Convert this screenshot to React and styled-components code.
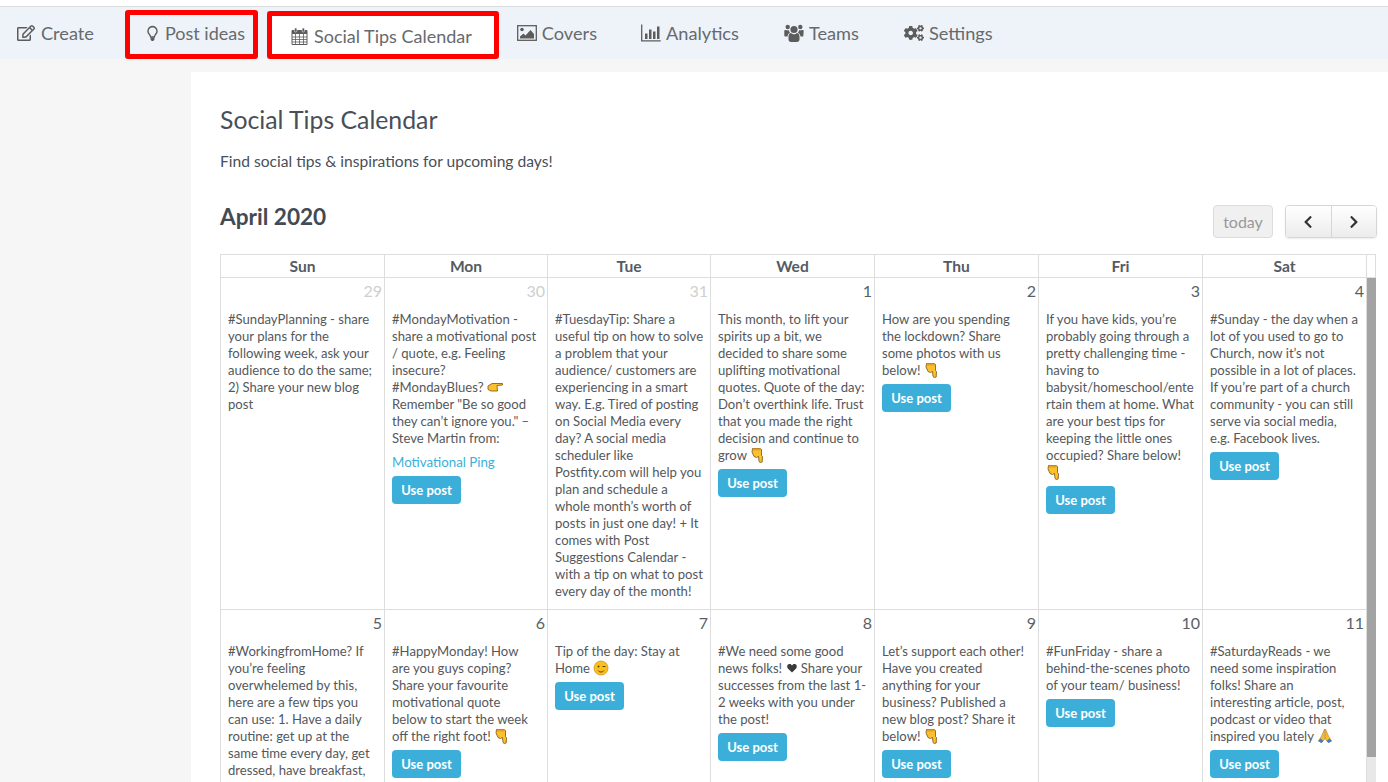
import React from 'react';
import styled, { createGlobalStyle } from 'styled-components';
import { FaRegEdit, FaCogs, FaChevronLeft, FaChevronRight } from 'react-icons/fa';

const GlobalStyle = createGlobalStyle`
  html, body {
    margin: 0;
    height: 782px;
    overflow: hidden;
    background: #fff;
    font-family: Lato, "Open Sans", sans-serif;
    color: #484c52;
  }
`;

const Page = styled.div`
  height: 782px;
  overflow: hidden;
  padding-top: 6px;
  box-sizing: border-box;
  background: #fff;
`;

const Nav = styled.nav`
  display: flex;
  align-items: flex-end;
  height: 52px;
  border-top: 1px solid #d9dcdf;
  background: #eef3fa;
`;

const NavItem = styled.a`
  display: flex;
  align-items: center;
  box-sizing: border-box;
  height: 52px;
  padding: 0 22px 0 23px;
  gap: 5px;
  font-size: 18.2px;
  color: #666a6e;
  white-space: nowrap;
  svg {
    flex: none;
    width: 20px;
    height: 20px;
    color: #5c5c5c;
  }
`;

const CreateItem = styled(NavItem)`
  padding: 0 0 0 17px;
  gap: 6px;
  svg {
    width: 18px;
    height: 18px;
  }
`;

const PostItem = styled(NavItem)`
  height: 49px;
  margin-left: 31px;
  padding: 0 8px 3px 14px;
  gap: 4px;
  font-size: 18px;
  border: 5px solid #f00;
  border-radius: 3px;
  svg {
    width: 17px;
    height: 17px;
  }
`;

const CalendarItem = styled(NavItem)`
  height: 48px;
  margin-left: 9px;
  padding: 2px 22px 0 19px;
  gap: 6px;
  font-size: 18px;
  border: 5px solid #f00;
  border-radius: 3px;
  background: #fff;
  svg {
    width: 17px;
    height: 18px;
  }
`;

const CoversItem = styled(NavItem)`
  padding: 0 21px 0 18px;
`;

const Layout = styled.div`
  display: flex;
  height: 723px;
  background: #f6f6f6;
`;

const Sidebar = styled.aside`
  flex: 0 0 191px;
`;

const Main = styled.main`
  flex: 1;
  margin-top: 13px;
  padding: 30px 11px 0 29px;
  background: #fff;
  overflow: hidden;
`;

const Title = styled.h1`
  margin: 0;
  font-size: 24.8px;
  font-weight: 400;
  line-height: 36px;
  color: #484f58;
`;

const Subtitle = styled.p`
  margin: 11px 0 0;
  font-size: 15.6px;
  line-height: 24px;
  color: #484f58;
`;

const CalendarHeader = styled.div`
  display: flex;
  justify-content: space-between;
  align-items: flex-start;
  margin-top: 27px;
  height: 54px;
`;

const MonthTitle = styled.h2`
  margin: 0;
  font-size: 22.6px;
  font-weight: 700;
  line-height: 34px;
  color: #434a54;
`;

const Controls = styled.div`
  display: flex;
  gap: 12px;
  margin-top: 5px;
`;

const TodayButton = styled.button`
  width: 60px;
  height: 33px;
  padding: 0;
  border: 1px solid #dcdcdc;
  border-radius: 4px;
  background: #f0f0f0;
  font: 400 16px Lato, sans-serif;
  color: #999;
`;

const ArrowGroup = styled.div`
  display: flex;
  width: 92px;
  height: 33px;
  box-sizing: border-box;
  border: 1px solid #d6d6d6;
  border-radius: 4px;
  overflow: hidden;
  box-shadow: 0 1px 2px rgba(0, 0, 0, 0.08);
`;

const ArrowButton = styled.button`
  flex: 1;
  display: flex;
  align-items: center;
  justify-content: center;
  padding: 0;
  border: 0;
  border-left: ${(p) => (p.$divided ? '1px solid #d6d6d6' : '0')};
  background: linear-gradient(#fff, #ececec);
  color: #333;
  font-size: 14px;
`;

const COLUMNS = '165px 163px 163px 164px 164px 164px 164px';

const Calendar = styled.div`
  width: 1156px;
  border-top: 1px solid #ddd;
  box-sizing: border-box;
`;

const HeadRow = styled.div`
  display: grid;
  grid-template-columns: ${COLUMNS} 9px;
`;

const HeadCell = styled.div`
  height: 23px;
  box-sizing: border-box;
  border-right: 1px solid #ddd;
  border-bottom: 1px solid #ddd;
  text-align: center;
  font-size: 15.6px;
  font-weight: 700;
  line-height: 23px;
  color: #555b63;
  &:first-child {
    border-left: 1px solid #ddd;
  }
`;

const BodyWrap = styled.div`
  display: flex;
`;

const Weeks = styled.div`
  display: grid;
  grid-template-columns: ${COLUMNS};
`;

const DayCell = styled.div`
  box-sizing: border-box;
  min-height: 332px;
  padding: 2px 7px 9px;
  border-right: 1px solid #ddd;
  border-bottom: 1px solid #ddd;
  &:nth-child(7n + 1) {
    border-left: 1px solid #ddd;
  }
`;

const DayNumber = styled.div`
  margin-right: -5px;
  text-align: right;
  font-size: 16px;
  line-height: 22px;
  color: ${(p) => (p.$muted ? '#cfcfcf' : '#595f66')};
`;

const Tip = styled.p`
  margin: 9px ${(p) => (p.$wide ? '-4px' : '0')} 0 0;
  font-size: 13.1px;
  line-height: 17px;
  color: #54585c;
  white-space: pre-line;
  overflow-wrap: anywhere;
`;

const TipLink = styled.a`
  display: block;
  margin-top: 7px;
  font-size: 13.3px;
  line-height: 17px;
  color: #3bafda;
`;

const UsePost = styled.button`
  display: block;
  width: 69px;
  height: 28px;
  margin-top: 5px;
  padding: 0;
  border: 0;
  border-radius: 4px;
  background: #3bafda;
  color: #fff;
  font: 700 13px Lato, sans-serif;
`;

const Scrollbar = styled.div`
  flex: 0 0 9px;
  background: #e8e8e8;
`;

const ScrollThumb = styled.div`
  height: 479px;
  background: #a3a3a3;
`;

const EmojiSvg = styled.svg`
  display: inline-block;
  width: ${(p) => p.$size || 16}px;
  height: ${(p) => p.$size || 16}px;
  vertical-align: ${(p) => (p.$size ? '-1px' : '-3px')};
`;

const BulbIcon = () => (
  <svg viewBox="0 0 17 17">
    <path d="M8.500 1.500a4.600 4.600 0 0 0-3 8c.8.800 1 1.500 1.100 2.500h3.800c.1-1 .3-1.700 1.100-2.500a4.600 4.600 0 0 0-3-8z" fill="none" stroke="currentColor" strokeWidth="1.300" />
    <path d="M6.600 12.500h3.800v2l-1 1.500h-1.800l-1-1.500z" fill="currentColor" />
  </svg>
);

const CalendarIcon = () => (
  <svg viewBox="0 0 17 18">
    <path d="M1 3.500h15v14H1z" fill="#fff" stroke="currentColor" strokeWidth="1" />
    <path d="M1 3.500h15v3.500H1z" fill="currentColor" />
    <path d="M1 10h15M1 12.500h15M1 15h15M4.500 7v10M8.500 7v10M12.500 7v10" stroke="currentColor" strokeWidth="0.8" />
    <rect x="3.500" y="1" width="2.400" height="4" rx="1" fill="currentColor" stroke="#fff" strokeWidth="0.5" />
    <rect x="11.100" y="1" width="2.400" height="4" rx="1" fill="currentColor" stroke="#fff" strokeWidth="0.5" />
  </svg>
);

const ImageIcon = () => (
  <svg viewBox="0 0 20 20">
    <rect x="0.700" y="2.700" width="18.600" height="14.600" fill="none" stroke="currentColor" strokeWidth="1.300" />
    <circle cx="5" cy="6.500" r="1.800" fill="currentColor" />
    <path d="M3 15.500v-2l3.500-3 2 2L13.500 7l3.500 4v4.500z" fill="currentColor" />
  </svg>
);

const ChartIcon = () => (
  <svg viewBox="0 0 20 20">
    <path d="M.7 1.500v16.300h19" fill="none" stroke="currentColor" strokeWidth="1.300" />
    <path d="M4 10.500h2.500V16H4zM8 6.500h2.500V16H8zM12 8.500h2.500V16H12zM16 3.500h2.500V16H16z" fill="currentColor" />
  </svg>
);

const UsersIcon = () => (
  <svg viewBox="0 0 20 20">
    <circle cx="10" cy="6.500" r="3.600" fill="currentColor" />
    <circle cx="3.700" cy="4" r="2.200" fill="currentColor" />
    <circle cx="16.300" cy="4" r="2.200" fill="currentColor" />
    <path d="M4.500 13.500c0-2.500 1.500-3.500 2.500-3.500 1 .9 2 1.200 3 1.200s2-.3 3-1.200c1 0 2.500 1 2.500 3.500v3c0 1.500-1 2.500-2.500 2.500H7c-1.500 0-2.500-1-2.500-2.500z" fill="currentColor" />
    <path d="M.3 7.500C.3 7 1 6.700 2 7c1 .5 2 .5 3 .3.100 1 .500 2 1.200 2.300-1.500.8-2.500 2-2.700 4H1.500c-.8 0-1.200-.5-1.200-1.300zM19.700 7.500c0-.5-.7-.8-1.700-.5-1 .5-2 .5-3 .3-.1 1-.5 2-1.200 2.300 1.500.8 2.500 2 2.700 4h1.700c.8 0 1.200-.5 1.200-1.300z" fill="currentColor" />
  </svg>
);

const PointDown = () => (
  <EmojiSvg viewBox="0 0 16 16">
    <path d="M2.500 1.500h7.500l1.500 1v6l1 1-.3 5.500-2 .5-1.200-1-.5-5-2 1-2.500-1L2 5z" fill="#fcc02e" stroke="#7a5210" strokeWidth="0.8" />
    <path d="M3 1.500h7v2H3z" fill="#e8a020" />
  </EmojiSvg>
);

const PointRight = () => (
  <EmojiSvg viewBox="0 0 16 16">
    <path d="M1 7l4-2.500h10.500v1.500L10 6.500l.5 5.500H4L1 10.500z" fill="#fcc02e" stroke="#7a5210" strokeWidth="0.8" />
  </EmojiSvg>
);

const Wink = () => (
  <EmojiSvg viewBox="0 0 16 16">
    <circle cx="8" cy="8" r="7" fill="#fcc21b" stroke="#c98a10" strokeWidth="0.7" />
    <circle cx="5.500" cy="6.500" r="1" fill="#5a3a10" />
    <path d="M9.500 6.500h3M5 10.500c1.500 2 4.500 2 6 0" fill="none" stroke="#5a3a10" strokeWidth="1" />
  </EmojiSvg>
);

const Pray = () => (
  <EmojiSvg viewBox="0 0 16 16">
    <path d="M7.500 1L4.500 8 1.500 13l3 1.500 3-3zM8.500 1l3 7 3 5-3 1.500-3-3z" fill="#fbb92f" stroke="#a9761a" strokeWidth="0.5" />
    <path d="M1 13l3.500 2 2-2-3-2.500zM15 13l-3.500 2-2-2 3-2.500z" fill="#3b7fc4" />
  </EmojiSvg>
);

const Heart = () => (
  <EmojiSvg viewBox="0 0 16 16" $size={12}>
    <path d="M8 14L2.500 8.500C.5 6 2 2.800 4.800 2.800 6.300 2.800 7.400 3.700 8 5c.6-1.300 1.700-2.200 3.200-2.200 2.800 0 4.300 3.200 2.300 5.700z" fill="#3a3a3a" />
  </EmojiSvg>
);

const weeks = [
  [
    { day: 29, muted: true, text: ['#SundayPlanning - share your plans for the following week, ask your audience to do the same; 2) Share your new blog post'], noButton: true },
    { day: 30, muted: true, text: ['#MondayMotivation - share a motivational post / quote, e.g. Feeling insecure? #MondayBlues? ', <PointRight key="e" />, ' Remember "Be so good they can’t ignore you." – Steve Martin from:'], link: 'Motivational Ping' },
    { day: 31, muted: true, wide: true, noButton: true, text: ['#TuesdayTip: Share a\nuseful tip on how to solve\na problem that your\naudience/ customers are\nexperiencing in a smart\nway. E.g. Tired of posting\non Social Media every\nday? A social media\nscheduler like\nPostfity.com will help you\nplan and schedule a\nwhole month’s worth of\nposts in just one day! + It\ncomes with Post\nSuggestions Calendar -\nwith a tip on what to post\nevery day of the month!'] },
    { day: 1, text: ['This month, to lift your spirits up a bit, we decided to share some uplifting motivational quotes. Quote of the day: Don’t overthink life. Trust that you made the right decision and continue to grow ', <PointDown key="e" />] },
    { day: 2, text: ['How are you spending the lockdown? Share some photos with us below! ', <PointDown key="e" />] },
    { day: 3, text: ['If you have kids, you’re probably going through a pretty challenging time - having to babysit/homeschool/entertain them at home. What are your best tips for keeping the little ones occupied? Share below! ', <PointDown key="e" />] },
    { day: 4, text: ['#Sunday - the day when a lot of you used to go to Church, now it’s not possible in a lot of places. If you’re part of a church community - you can still serve via social media, e.g. Facebook lives.'] },
  ],
  [
    { day: 5, text: ['#WorkingfromHome? If you’re feeling overwhelemed by this, here are a few tips you can use: 1. Have a daily routine: get up at the same time every day, get dressed, have breakfast,'], noButton: true },
    { day: 6, text: ['#HappyMonday! How\nare you guys coping?\nShare your favourite\nmotivational quote\nbelow to start the week\noff the right foot! ', <PointDown key="e" />] },
    { day: 7, text: ['Tip of the day: Stay at Home ', <Wink key="e" />] },
    { day: 8, text: ['#We need some good news folks! ', <Heart key="e" />, ' Share your successes from the last 1-2 weeks with you under the post!'] },
    { day: 9, text: ['Let’s support each other! Have you created anything for your business? Published a new blog post? Share it below! ', <PointDown key="e" />] },
    { day: 10, text: ['#FunFriday - share a behind-the-scenes photo of your team/ business!'] },
    { day: 11, text: ['#SaturdayReads - we\nneed some inspiration\nfolks! Share an\ninteresting article, post,\npodcast or video that\ninspired you lately ', <Pray key="e" />] },
  ],
];

const dayNames = ['Sun', 'Mon', 'Tue', 'Wed', 'Thu', 'Fri', 'Sat'];

export default function App() {
  return (
    <Page>
      <GlobalStyle />
      <Nav>
        <CreateItem><FaRegEdit />Create</CreateItem>
        <PostItem><BulbIcon />Post ideas</PostItem>
        <CalendarItem><CalendarIcon />Social Tips Calendar</CalendarItem>
        <CoversItem><ImageIcon />Covers</CoversItem>
        <NavItem><ChartIcon />Analytics</NavItem>
        <NavItem><UsersIcon />Teams</NavItem>
        <NavItem><FaCogs />Settings</NavItem>
      </Nav>
      <Layout>
        <Sidebar />
        <Main>
          <Title>Social Tips Calendar</Title>
          <Subtitle>Find social tips &amp; inspirations for upcoming days!</Subtitle>
          <CalendarHeader>
            <MonthTitle>April 2020</MonthTitle>
            <Controls>
              <TodayButton>today</TodayButton>
              <ArrowGroup>
                <ArrowButton><FaChevronLeft /></ArrowButton>
                <ArrowButton $divided><FaChevronRight /></ArrowButton>
              </ArrowGroup>
            </Controls>
          </CalendarHeader>
          <Calendar>
            <HeadRow>
              {dayNames.map((name) => (
                <HeadCell key={name}>{name}</HeadCell>
              ))}
              <HeadCell />
            </HeadRow>
            <BodyWrap>
              <Weeks>
                {weeks.flat().map((cell) => (
                  <DayCell key={cell.day}>
                    <DayNumber $muted={cell.muted}>{cell.day}</DayNumber>
                    <Tip $wide={cell.wide}>{cell.text}</Tip>
                    {cell.link && <TipLink>{cell.link}</TipLink>}
                    {!cell.noButton && <UsePost>Use post</UsePost>}
                  </DayCell>
                ))}
              </Weeks>
              <Scrollbar>
                <ScrollThumb />
              </Scrollbar>
            </BodyWrap>
          </Calendar>
        </Main>
      </Layout>
    </Page>
  );
}
